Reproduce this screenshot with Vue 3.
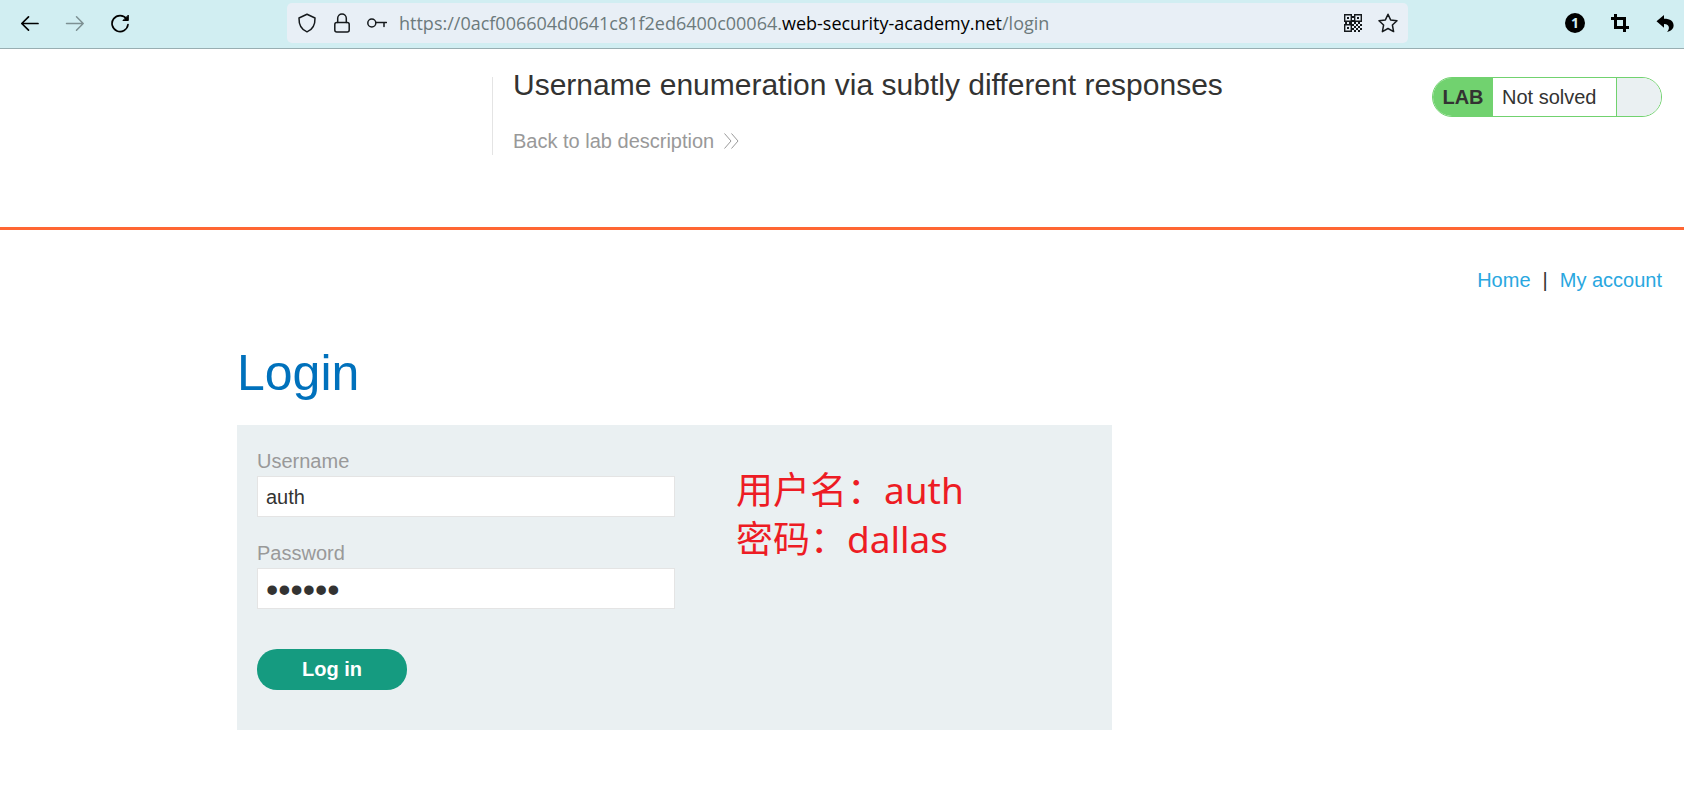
<script setup>
import { ref } from 'vue'

const username = ref('auth')
const password = ref('dallas')

const credentials = [
  { label: '用户名', value: 'auth' },
  { label: '密码', value: 'dallas' },
]
</script>

<template>
  <div class="window">
    <div class="toolbar">
      <nav class="history" aria-label="History">
        <button type="button" aria-label="Back">
          <svg viewBox="0 0 20 20" class="line bold"><path d="M18 10.500H1.800M8.500 3.800 1.800 10.500 8.500 17.200" /></svg>
        </button>
        <button type="button" aria-label="Forward" disabled>
          <svg viewBox="0 0 20 20" class="line"><path d="M1.500 10.500H18.200M11.500 3.800 18.200 10.500 11.500 17.200" /></svg>
        </button>
        <button type="button" aria-label="Reload">
          <svg viewBox="0 0 20 20" class="line bold">
            <path d="M16.500 5.800A8 8 0 1 0 18 11.500" />
            <path d="M18.300 2.500v5h-5z" fill="currentColor" stroke-width="1" />
          </svg>
        </button>
      </nav>

      <div class="address">
        <button type="button" aria-label="Tracking protection">
          <svg viewBox="0 0 20 20" class="line"><path d="M10 1.200 18 5C18.200 11.500 16 16.500 10 18.900 4 16.500 1.800 11.500 2 5z" /></svg>
        </button>
        <button type="button" aria-label="Site security">
          <svg viewBox="0 0 20 20" class="line">
            <rect x="2.800" y="9.500" width="14.400" height="9.500" rx="2" />
            <path d="M5.700 9.500V5.300a4.300 4.300 0 0 1 8.600 0v4.200" />
          </svg>
        </button>
        <button type="button" aria-label="Saved passwords">
          <svg viewBox="0 0 20 20" class="line">
            <circle cx="4.800" cy="10" r="4" />
            <path d="M8.800 9.500H19.500M17 9.500v4" />
          </svg>
        </button>
        <span class="url">https://0acf006604d0641c81f2ed6400c00064.<b>web-security-academy.net</b>/login</span>
        <button type="button" aria-label="QR code">
          <svg viewBox="0 0 20 20">
            <path fill="none" stroke="currentColor" stroke-width="1.400" d="M1.700 1.700h6.600v6.600H1.700zM11.700 1.700h6.600v6.600h-6.600zM1.700 11.700h6.600v6.600H1.700z" />
            <path d="M4 4h2v2H4zM14 4h2v2h-2zM4 14h2v2H4zM9 3h2v2H9zM9 7h2v2H9zM2 9h2v2H2zM6 9h3v2H6zM11 9h2v2h-2zM15 9h2v2h-2zM9 11h2v2H9zM13 11h2v2h-2zM17 11h2v2h-2zM11 13h2v2h-2zM15 13h2v2h-2zM9 15h2v2H9zM13 15h2v2h-2zM17 15h2v2h-2zM11 17h2v2h-2zM15 17h2v2h-2z" />
          </svg>
        </button>
        <button type="button" aria-label="Bookmark">
          <svg viewBox="0 0 20 20" class="line"><path d="M10 1.200 12.600 6.900 19 7.700 14.400 12 15.600 18.600 10 15.500 4.400 18.600 5.600 12 1 7.700 7.400 6.900z" /></svg>
        </button>
      </div>

      <div class="actions">
        <button type="button" class="counter" aria-label="Notifications">1</button>
        <button type="button" aria-label="Crop">
          <svg viewBox="0 0 20 20"><path fill="none" stroke="currentColor" stroke-width="3" d="M1 5.500H14.500V19M5.500 1V14.500H19" /></svg>
        </button>
        <button type="button" aria-label="Undo">
          <svg viewBox="0 0 20 20"><path d="M1.500 8.200 9 2V5.800C15.500 5.800 18.600 8.500 18.600 12.500 18.600 15.500 16.500 18 12 19 14.500 16.800 15.500 11.200 9 11V14.800z" /></svg>
        </button>
      </div>
    </div>

    <header class="lab-header">
      <div class="lab-title">
        <h2>Username enumeration via subtly different responses</h2>
        <a href="#">Back to lab description
          <svg viewBox="0 0 15 16"><path d="M.5.500 7 8 .5 15.500M7.500.500 14 8 7.500 15.500" /></svg>
        </a>
      </div>
      <div class="status">
        <strong>LAB</strong>
        <span class="state">Not solved</span>
        <span class="lamp"></span>
      </div>
    </header>

    <nav class="links" aria-label="Site">
      <a href="#">Home</a><span>|</span><a href="#">My account</a>
    </nav>

    <main>
      <h1>Login</h1>
      <section class="panel">
        <form @submit.prevent>
          <label for="username">Username</label>
          <input id="username" v-model="username" type="text" />
          <label for="password">Password</label>
          <input id="password" v-model="password" type="password" />
          <button type="submit">Log in</button>
        </form>
        <div class="note">
          <p v-for="item in credentials" :key="item.label">{{ item.label }}：{{ item.value }}</p>
        </div>
      </section>
    </main>
  </div>
</template>

<style>
body {
  margin: 0;
  background: #fff;
}
</style>

<style scoped>
* {
  box-sizing: border-box;
}

.window {
  color: #333332;
  font: 20px/26px "Liberation Sans", Arial, sans-serif;
}

a {
  text-decoration: none;
}

/* Browser toolbar */
.toolbar {
  display: grid;
  grid-template-columns: 287px minmax(0, 1fr) 276px;
  align-items: center;
  height: 49px;
  padding-bottom: 2px;
  background: #d1eef2;
  border-bottom: 1px solid #98aeb2;
}

.toolbar button {
  flex: none;
  width: 20px;
  height: 20px;
  padding: 0;
  border: 0;
  background: none;
  color: #000;
}

.toolbar button:disabled {
  color: #7d9093;
}

.toolbar svg {
  display: block;
  width: 20px;
  height: 20px;
  fill: currentColor;
}

.toolbar svg.line {
  fill: none;
  stroke: currentColor;
  stroke-width: 1.5;
  stroke-linecap: round;
  stroke-linejoin: round;
}

.toolbar svg.bold {
  stroke-width: 1.7;
}

.history,
.actions {
  display: flex;
  gap: 25px;
  padding-left: 20px;
}

.actions {
  justify-content: flex-end;
  padding: 0 9px 0 0;
}

.address {
  display: flex;
  align-items: center;
  gap: 15px;
  height: 40px;
  padding: 0 10px;
  border-radius: 5px;
  background: #e8eff6;
}

.address button {
  color: #15191c;
}

.url {
  flex: 1;
  min-width: 0;
  overflow: hidden;
  margin-left: -3px;
  color: #6c7a7c;
  font: 18px/26px "Open Sans", "Noto Sans", sans-serif;
  white-space: nowrap;
}

.url b {
  color: #000;
  font-weight: 400;
}

.toolbar .counter {
  border-radius: 50%;
  background: #000;
  color: #d1eef2;
  font: bold 14px/20px "Noto Sans", sans-serif;
}

/* Lab banner */
.lab-header {
  display: grid;
  grid-template-columns: 472px minmax(0, 1fr) auto;
  align-items: start;
  height: 181px;
  padding: 28px 22px 0 20px;
  border-bottom: 3px solid #ff6633;
}

.lab-title {
  grid-column: 2;
  height: 78px;
  padding-left: 20px;
  border-left: 1px solid #e4e4e4;
}

.lab-title h2 {
  margin: -10px 0 25px;
  font-size: 30px;
  font-weight: 400;
  line-height: 36px;
}

.lab-title a {
  display: flex;
  align-items: center;
  gap: 10px;
  color: #999;
}

.lab-title svg {
  width: 15px;
  height: 16px;
  fill: none;
  stroke: currentColor;
}

.status {
  display: flex;
  height: 40px;
  overflow: hidden;
  border: 1px solid #71d26f;
  border-radius: 20px;
  line-height: 38px;
}

.status strong {
  width: 60px;
  background: #71d26f;
  text-align: center;
}

.state {
  width: 123px;
  padding-left: 9px;
}

.lamp {
  width: 45px;
  border-left: 1px solid #71d26f;
  background: #eaf0f2;
}

/* Page */
.links {
  display: flex;
  justify-content: flex-end;
  gap: 12px;
  padding: 37px 22px 0;
}

.links a {
  color: #29a7df;
}

main {
  max-width: 1210px;
  margin: 0 auto;
}

h1 {
  margin: 49px 0 21px;
  color: #0071bc;
  font-size: 50px;
  font-weight: 400;
  line-height: 62px;
}

.panel {
  display: flex;
  gap: 61px;
  max-width: 875px;
  padding: 20px 20px 40px;
  background: #eaf0f2;
}

form {
  display: flex;
  flex: 0 1 418px;
  flex-direction: column;
  min-width: 0;
}

label {
  padding-top: 2px;
  color: #999;
  line-height: 29px;
}

input {
  width: 100%;
  height: 41px;
  margin-bottom: 20px;
  padding: 2px 8px 0;
  border: 1px solid #e4e4e4;
  background: #fff;
  color: #333332;
  font: inherit;
}

input[type="password"] {
  font-size: 35px;
}

form button {
  width: 150px;
  height: 41px;
  margin-top: 20px;
  padding: 0 0 2px;
  border: 0;
  border-radius: 20px;
  background: #159b80;
  color: #fff;
  font: inherit;
  font-weight: 700;
}

.note {
  padding-top: 20px;
  color: #ed1c24;
  font: 37px/49px "Noto Sans", "Noto Sans CJK SC", sans-serif;
}

.note p {
  margin: 0;
}
</style>
